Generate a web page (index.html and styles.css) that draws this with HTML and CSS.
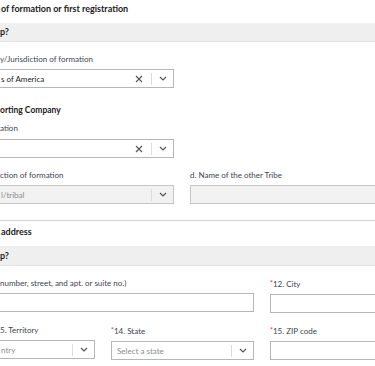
FILE: index.html
```html
<!DOCTYPE html>
<html lang="en">
<head>
<meta charset="utf-8">
<title>Form</title>
<link rel="stylesheet" href="styles.css">
</head>
<body>
<div class="page">
  <h2 class="title">of formation or first registration</h2>
  <div class="band">p?</div>

  <div class="grid g-two first">
    <div class="field">
      <label class="label">y/Jurisdiction of formation</label>
      <div class="select">
        <span class="value">s of America</span>
        <span class="clear"><svg width="8" height="8" viewBox="0 0 8 8"><path d="M1 1L7 7M7 1L1 7" stroke="#555" stroke-width="1.1" fill="none"/></svg></span>
        <span class="sep"></span>
        <span class="arrow"><svg width="8" height="5" viewBox="0 0 8 5"><path d="M1 1L4 4L7 1" stroke="#555" stroke-width="1.2" fill="none"/></svg></span>
      </div>
    </div>
    <div></div>
  </div>

  <h3 class="sub">orting Company</h3>
  <div class="grid g-two">
    <div class="field">
      <label class="label tight">ation</label>
      <div class="select">
        <span class="value"></span>
        <span class="clear"><svg width="8" height="8" viewBox="0 0 8 8"><path d="M1 1L7 7M7 1L1 7" stroke="#555" stroke-width="1.1" fill="none"/></svg></span>
        <span class="sep"></span>
        <span class="arrow"><svg width="8" height="5" viewBox="0 0 8 5"><path d="M1 1L4 4L7 1" stroke="#555" stroke-width="1.2" fill="none"/></svg></span>
      </div>
    </div>
    <div></div>
  </div>

  <div class="grid g-two row-c">
    <div class="field">
      <label class="label">ction of formation</label>
      <div class="select disabled">
        <span class="value muted">l/tribal</span>
        <span class="sep"></span>
        <span class="arrow"><svg width="8" height="5" viewBox="0 0 8 5"><path d="M1 1L4 4L7 1" stroke="#555" stroke-width="1.2" fill="none"/></svg></span>
      </div>
    </div>
    <div class="field">
      <label class="label">d. Name of the other Tribe</label>
      <div class="input disabled"></div>
    </div>
  </div>

  <hr class="divider">

  <h2 class="title addr">address</h2>
  <div class="band b2">p?</div>

  <div class="grid g-addr first">
    <div class="field">
      <label class="label">number, street, and apt. or suite no.)</label>
      <div class="input"></div>
    </div>
    <div class="field">
      <label class="label"><span class="req">*</span>12. City</label>
      <div class="input"></div>
    </div>
  </div>

  <div class="grid g-three row-c">
    <div class="field">
      <label class="label">5. Territory</label>
      <div class="select">
        <span class="value ph">ntry</span>
        <span class="sep"></span>
        <span class="arrow"><svg width="8" height="5" viewBox="0 0 8 5"><path d="M1 1L4 4L7 1" stroke="#555" stroke-width="1.2" fill="none"/></svg></span>
      </div>
    </div>
    <div class="field">
      <label class="label"><span class="req">*</span>14. State</label>
      <div class="select">
        <span class="value ph">Select a state</span>
        <span class="sep"></span>
        <span class="arrow"><svg width="8" height="5" viewBox="0 0 8 5"><path d="M1 1L4 4L7 1" stroke="#555" stroke-width="1.2" fill="none"/></svg></span>
      </div>
    </div>
    <div class="field">
      <label class="label"><span class="req">*</span>15. ZIP code</label>
      <div class="input"></div>
    </div>
  </div>
</div>
</body>
</html>
```

FILE: styles.css
```css
html, body {
  margin: 0;
  padding: 0;
  background: #fff;
  overflow: hidden;
}
body {
  font-family: Lato, "Noto Sans", sans-serif;
  color: #1b1b1b;
  width: 375px;
  height: 366px;
}
.page {
  margin-left: -5px;
  width: 440px;
}
.title {
  margin: 3px 0 0;
  padding-left: 6px;
  font-size: 9px;
  line-height: 12px;
  font-weight: 700;
}
.title.addr {
  margin-top: 5px;
}
.band {
  margin-top: 8px;
  height: 18px;
  line-height: 18px;
  padding-left: 5px;
  background: #efefef;
  box-shadow: 0 1px 0 #e3e3e3;
  font-size: 9px;
  font-weight: 700;
}
.band.b2 {
  height: 19px;
  line-height: 19px;
}
.sub {
  margin: 16px 0 0;
  padding-left: 5px;
  font-size: 8.5px;
  line-height: 12px;
  font-weight: 700;
}
.grid {
  display: grid;
  column-gap: 16px;
}
.grid.first {
  margin-top: 13px;
}
.grid.row-c {
  margin-top: 12px;
}
.g-two {
  grid-template-columns: 179px 1fr;
}
.g-addr {
  grid-template-columns: 259px 1fr;
}
.g-three {
  grid-template-columns: 100px 143px 1fr;
}
.sub + .grid {
  margin-top: 7px;
}
.field {
  display: flex;
  flex-direction: column;
}
.label {
  display: block;
  font-size: 8px;
  line-height: 10px;
  color: #3d4551;
  padding-left: 5px;
  margin-bottom: 5px;
  white-space: nowrap;
}
.field + .field .label {
  padding-left: 0;
}
.label.tight {
  margin-bottom: 6px;
}
.req {
  color: #d83933;
  font-size: 7px;
  vertical-align: 1px;
}
.select, .input {
  box-sizing: border-box;
  height: 19px;
  border: 1px solid #b4b7ba;
  background: #fff;
  display: flex;
  align-items: center;
}
.disabled {
  background: #f2f2f2;
  border-color: #c3c5c7;
}
.value {
  flex: 1;
  padding-left: 5px;
  font-size: 8px;
  color: #1b1b1b;
  white-space: nowrap;
  overflow: hidden;
}
.value.muted {
  color: #8a8a8a;
}
.value.ph {
  color: #8d8d8d;
}
.clear {
  width: 24px;
  display: flex;
  justify-content: center;
  align-items: center;
}
.sep {
  width: 1px;
  height: 12px;
  background: #dcdcdc;
}
.arrow {
  width: 21px;
  display: flex;
  justify-content: center;
  align-items: center;
}
.divider {
  margin: 16px 0 0;
  border: 0;
  height: 1px;
  background: #d3d3d3;
}
```
